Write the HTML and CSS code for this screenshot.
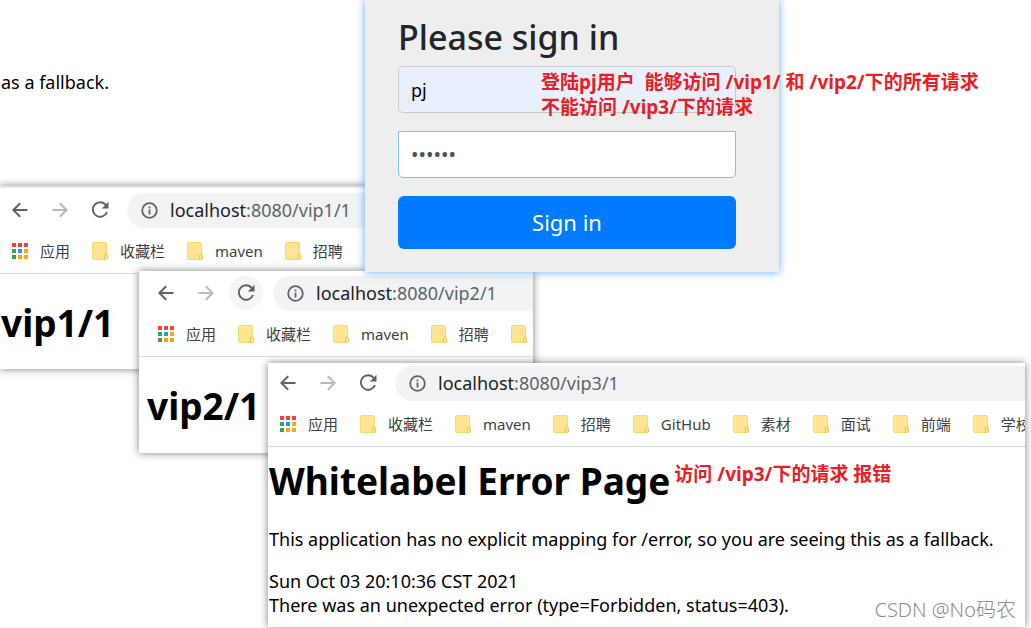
FILE: index.html
```html
<!DOCTYPE html>
<html lang="zh-CN">
<head>
    <meta charset="UTF-8">
    <meta name="viewport" content="width=device-width, initial-scale=1.0">
    <title>Please sign in</title>
    <link rel="stylesheet" href="styles.css">
</head>
<body>

<!-- shared icons -->
<svg class="sprite" aria-hidden="true">
    <symbol id="back" viewBox="0 0 16 16"><path d="M15.5 8H1.5M8.2 1.2L1.4 8l6.8 6.8" fill="none" stroke="currentColor" stroke-width="2"/></symbol>
    <symbol id="forward" viewBox="0 0 16 16"><path d="M.5 8h14M7.8 1.2L14.6 8l-6.8 6.8" fill="none" stroke="currentColor" stroke-width="2"/></symbol>
    <symbol id="reload" viewBox="0 0 18 18"><path d="M14.9 4A7.3 7.3 0 1 0 16 11" fill="none" stroke="currentColor" stroke-width="2"/><path d="M17.5 .8v6.7h-6.7z" fill="currentColor"/></symbol>
    <symbol id="info" viewBox="0 0 17 17"><circle cx="8.5" cy="8.5" r="7.3" fill="none" stroke="currentColor" stroke-width="1.8"/><path d="M7.6 4.4h1.8v1.8H7.6zM7.6 7.6h1.8v5H7.6z" fill="currentColor"/></symbol>
    <symbol id="apps" viewBox="0 0 16 16">
        <path d="M0 0h4v4H0zM6 0h4v4H6zM12 0h4v4h-4z" fill="#f44336"/>
        <path d="M0 6h4v4H0zM0 12h4v4H0z" fill="#34a05a"/>
        <path d="M6 6h4v4H6z" fill="#2196f3"/>
        <path d="M12 6h4v4h-4zM6 12h4v4H6zM12 12h4v4h-4z" fill="#fba90a"/>
    </symbol>
    <symbol id="folder" viewBox="0 0 16 18"><path d="M.5 1.5a1 1 0 0 1 1-1h12a1 1 0 0 1 1 1v15a1 1 0 0 1-1 1h-12a1 1 0 0 1-1-1z" fill="#ffe591" stroke="#fad96a"/><path d="M12.5 17.4v-4a1.5 1.5 0 0 1 3 0v2.6a1.5 1.5 0 0 1-1.5 1.5z" fill="#ffe591" stroke="#efc94f"/></symbol>
</svg>

<main class="desktop">
    <p class="fallback">as a fallback.</p>

    <section class="window window-vip1">
        <div class="toolbar">
            <button class="nav-btn" aria-label="后退"><svg width="16" height="16"><use href="#back"/></svg></button>
            <button class="nav-btn disabled" aria-label="前进"><svg width="16" height="16"><use href="#forward"/></svg></button>
            <button class="nav-btn" aria-label="刷新"><svg width="18" height="18"><use href="#reload"/></svg></button>
            <div class="address"><svg width="17" height="17"><use href="#info"/></svg><span><b>localhost</b>:8080/vip1/1</span></div>
        </div>
        <nav class="bookmarks">
            <a href="#"><svg width="16" height="16"><use href="#apps"/></svg>应用</a>
            <a href="#"><svg width="16" height="18"><use href="#folder"/></svg>收藏栏</a>
            <a href="#"><svg width="16" height="18"><use href="#folder"/></svg>maven</a>
            <a href="#"><svg width="16" height="18"><use href="#folder"/></svg>招聘</a>
        </nav>
        <div class="page">
            <h1>vip1/1</h1>
        </div>
    </section>

    <section class="window window-vip2">
        <div class="toolbar">
            <button class="nav-btn" aria-label="后退"><svg width="16" height="16"><use href="#back"/></svg></button>
            <button class="nav-btn disabled" aria-label="前进"><svg width="16" height="16"><use href="#forward"/></svg></button>
            <button class="nav-btn active" aria-label="刷新"><svg width="18" height="18"><use href="#reload"/></svg></button>
            <div class="address"><svg width="17" height="17"><use href="#info"/></svg><span><b>localhost</b>:8080/vip2/1</span></div>
        </div>
        <nav class="bookmarks">
            <a href="#"><svg width="16" height="16"><use href="#apps"/></svg>应用</a>
            <a href="#"><svg width="16" height="18"><use href="#folder"/></svg>收藏栏</a>
            <a href="#"><svg width="16" height="18"><use href="#folder"/></svg>maven</a>
            <a href="#"><svg width="16" height="18"><use href="#folder"/></svg>招聘</a>
            <a href="#" aria-label="GitHub"><svg width="16" height="18"><use href="#folder"/></svg></a>
        </nav>
        <div class="page">
            <h1>vip2/1</h1>
        </div>
    </section>

    <section class="window window-vip3">
        <div class="toolbar">
            <button class="nav-btn" aria-label="后退"><svg width="16" height="16"><use href="#back"/></svg></button>
            <button class="nav-btn disabled" aria-label="前进"><svg width="16" height="16"><use href="#forward"/></svg></button>
            <button class="nav-btn" aria-label="刷新"><svg width="18" height="18"><use href="#reload"/></svg></button>
            <div class="address"><svg width="17" height="17"><use href="#info"/></svg><span><b>localhost</b>:8080/vip3/1</span></div>
        </div>
        <nav class="bookmarks">
            <a href="#"><svg width="16" height="16"><use href="#apps"/></svg>应用</a>
            <a href="#"><svg width="16" height="18"><use href="#folder"/></svg>收藏栏</a>
            <a href="#"><svg width="16" height="18"><use href="#folder"/></svg>maven</a>
            <a href="#"><svg width="16" height="18"><use href="#folder"/></svg>招聘</a>
            <a href="#"><svg width="16" height="18"><use href="#folder"/></svg>GitHub</a>
            <a href="#"><svg width="16" height="18"><use href="#folder"/></svg>素材</a>
            <a href="#"><svg width="16" height="18"><use href="#folder"/></svg>面试</a>
            <a href="#"><svg width="16" height="18"><use href="#folder"/></svg>前端</a>
            <a href="#"><svg width="16" height="18"><use href="#folder"/></svg>学校</a>
        </nav>
        <div class="page page-error">
            <div class="error-title">
                <h1>Whitelabel Error Page</h1>
                <span class="note">访问 /vip3/下的请求 报错</span>
            </div>
            <p>This application has no explicit mapping for /error, so you are seeing this as a fallback.</p>
            <p>Sun Oct 03 20:10:36 CST 2021<br>There was an unexpected error (type=Forbidden, status=403).</p>
        </div>
    </section>

    <form class="signin">
        <h2>Please sign in</h2>
        <input class="username" type="text" value="pj" aria-label="Username">
        <input class="password" type="password" value="123456" aria-label="Password">
        <button type="button">Sign in</button>
    </form>

    <p class="note note-top">登陆pj用户  能够访问 /vip1/ 和 /vip2/下的所有请求
不能访问 /vip3/下的请求</p>

    <span class="watermark">CSDN @No码农</span>
</main>

</body>
</html>
```

FILE: styles.css
```css
* {
    box-sizing: border-box;
}
body {
    margin: 0;
    font-family: "Noto Sans", "Noto Sans CJK SC", sans-serif;
    font-size: 18px;
    line-height: 24px;
    color: #000;
    background-color: #fff;
}
h1, h2, p {
    margin: 0;
}
button, input {
    font-family: inherit;
}
.sprite {
    display: none;
}
.desktop {
    position: relative;
    height: 100vh;
    overflow: hidden;
}
.fallback {
    padding: 70px 1px 0;
}

/* browser windows */
.window {
    position: absolute;
    overflow: hidden;
    background-color: #fff;
    box-shadow: 0 0 8px rgba(0, 0, 0, 0.5);
}
.window-vip1 {
    left: 0;
    top: 186px;
    width: 400px;
    height: 183px;
    padding-top: 5px;
    border-top: 2px solid #e4e6ea;
}
.window-vip2 {
    left: 139px;
    top: 271px;
    width: 394px;
    height: 182px;
    padding-top: 5px;
}
.window-vip3 {
    left: 268px;
    right: 6px;
    top: 363px;
    bottom: 1px;
    padding-top: 3px;
}
.toolbar {
    display: flex;
    align-items: flex-start;
    height: 35px;
}
.nav-btn {
    display: flex;
    align-items: center;
    justify-content: center;
    width: 34px;
    height: 34px;
    margin: 0 3px;
    padding: 0;
    border: none;
    border-radius: 50%;
    background: none;
    color: #5f6368;
}
.nav-btn.disabled {
    color: #bababc;
}
.nav-btn.active {
    background-color: #f5f5f5;
}
.address {
    display: flex;
    flex: 1;
    align-items: center;
    gap: 12px;
    height: 35px;
    margin-left: 7px;
    padding: 0 0 1px 14px;
    border-radius: 18px 0 0 18px;
    background-color: #f1f3f4;
    color: #5f6368;
    white-space: nowrap;
}
.address b {
    font-weight: 400;
    color: #202124;
}
.bookmarks {
    display: flex;
    align-items: center;
    gap: 22px;
    height: 46px;
    padding-left: 12px;
    border-bottom: 1px solid #d8dadd;
}
.bookmarks a {
    display: flex;
    flex: none;
    align-items: center;
    gap: 12px;
    font-size: 15px;
    color: #3c4043;
    text-decoration: none;
}
.window-vip2 .toolbar {
    padding-left: 7px;
}
.window-vip2 .bookmarks {
    padding-left: 19px;
}
.page {
    padding: 25px 1px;
}
.window-vip2 .page {
    padding-left: 8px;
}
.page h1 {
    font-size: 37px;
    line-height: 48px;
}
.page-error {
    padding-top: 10px;
}
.page-error p {
    margin-bottom: 18px;
    white-space: nowrap;
}
.error-title {
    display: flex;
    gap: 4px;
    margin-bottom: 22px;
    white-space: nowrap;
}
.error-title .note {
    padding-top: 5px;
}

/* login form */
.signin {
    position: absolute;
    left: 365px;
    top: 0;
    display: flex;
    flex-direction: column;
    gap: 18px;
    width: 414px;
    padding: 13px 43px 23px 33px;
    background-color: #eee;
    box-shadow: 0 0 8px rgba(30, 130, 255, 0.7);
}
.signin h2 {
    margin-bottom: -13px;
    font-size: 34px;
    font-weight: 500;
    line-height: 48px;
    color: #212529;
}
.signin input {
    width: 100%;
    height: 47px;
    padding: 0 12px;
    border: 1px solid #c6c9ce;
    border-radius: 5px;
    outline: none;
    font-size: 18px;
}
.signin .username {
    background-color: #e8f0fe;
}
.signin .password {
    border-color: #80bdff;
    border-radius: 0 0 5px 5px;
    color: #495057;
    font-size: 20px;
}
.signin button {
    height: 53px;
    padding: 0 0 2px;
    border: none;
    border-radius: 6px;
    background-color: #007bff;
    color: #fff;
    font-size: 22px;
}

/* red notes */
.note {
    font-size: 19px;
    font-weight: 700;
    line-height: 25px;
    color: #ed1c24;
    white-space: pre;
}
.note-top {
    position: absolute;
    left: 541px;
    top: 70px;
}
.watermark {
    position: absolute;
    right: 15px;
    bottom: 6px;
    font-size: 20px;
    font-weight: 300;
    color: #8c8c8c;
}
```
